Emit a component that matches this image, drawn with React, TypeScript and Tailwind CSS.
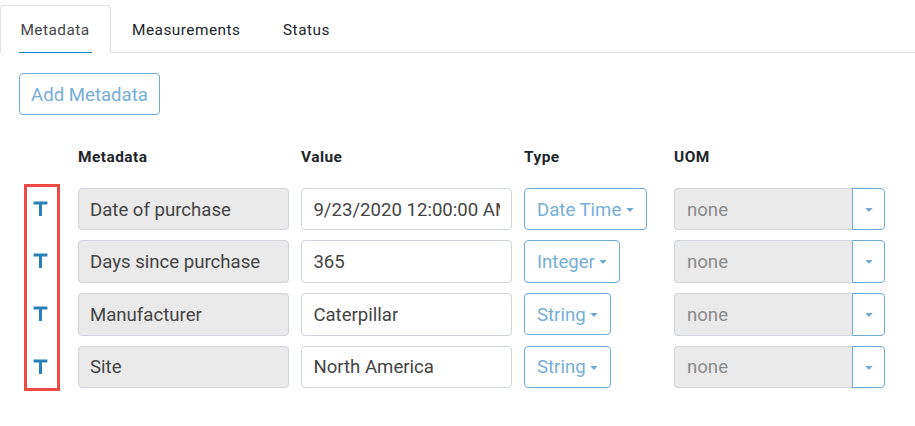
import React from 'react';

type Row = {
  name: string;
  value: string;
  type: string;
  height: string;
  typeSize: string;
  textPad: string;
  caretPad: string;
};

const rows: Row[] = [
  { name: 'Date of purchase', value: '9/23/2020 12:00:00 AM', type: 'Date Time', height: 'h-[42px] mb-[10px]', typeSize: 'w-[123px] h-[42px]', textPad: 'pt-px', caretPad: 'pt-px' },
  { name: 'Days since purchase', value: '365', type: 'Integer', height: 'h-[43px] mb-[10px]', typeSize: 'w-[96px] h-[43px]', textPad: 'pt-px', caretPad: 'pt-px' },
  { name: 'Manufacturer', value: 'Caterpillar', type: 'String', height: 'h-[43px] mb-[10px]', typeSize: 'w-[87px] h-[42px]', textPad: 'pt-px', caretPad: 'pt-0' },
  { name: 'Site', value: 'North America', type: 'String', height: 'h-[42px]', typeSize: 'w-[87px] h-[42px]', textPad: 'pb-px', caretPad: 'pt-[2px]' },
];

function Caret() {
  return (
    <svg className="block h-1 w-2 shrink-0" viewBox="0 0 8 4" fill="#6faad3">
      <path d="M.3 0h7.4L4 4z" />
    </svg>
  );
}

function TextIcon() {
  return (
    <svg className="block h-4 w-[15px]" viewBox="0 0 15 16" fill="#2a80b9">
      <path d="M.6 .6h13.8v2.9H9v11.4H6V3.5H.6z" />
    </svg>
  );
}

function MetadataRow({ row }: { row: Row }) {
  return (
    <div className={`flex ${row.height}`}>
      <div className="w-[59px] pt-[13px] pl-[14px]">
        <TextIcon />
      </div>
      <div className={`mr-3 flex h-full w-[211px] items-center rounded-[4px] border border-[#ced4da] bg-[#eaeaea] px-[11px] text-[#444] ${row.textPad}`}>
        {row.name}
      </div>
      <div className={`mr-3 flex h-full w-[211px] items-center rounded-[4px] border border-[#ced4da] bg-white px-[11.4px] text-[#444] ${row.textPad}`}>
        <span className="block overflow-hidden whitespace-nowrap">{row.value}</span>
      </div>
      <div className="w-[150px]">
        <button className={`flex items-center justify-between rounded-[4px] border border-[#6faad3] pr-[12px] pl-[12px] text-[#76aed5] ${row.typeSize}`}>
          <span className={`whitespace-nowrap ${row.textPad}`}>{row.type}</span>
          <span className="pt-px">
            <Caret />
          </span>
        </button>
      </div>
      <div className="flex h-full w-[211px]">
        <div className={`flex w-[178px] items-center rounded-l-[4px] border border-r-0 border-[#ced4da] bg-[#eaeaea] pl-[12px] text-[#8a8a8a] ${row.textPad}`}>
          none
        </div>
        <button className={`flex w-[33px] items-center justify-center rounded-r-[4px] border border-[#6faad3] ${row.caretPad}`}>
          <Caret />
        </button>
      </div>
    </div>
  );
}

export default function App() {
  return (
    <div className="h-[426px] w-[915px] overflow-hidden bg-white font-[Roboto,sans-serif] text-[#212529]">
      <nav className="flex h-[53px] pt-[5px] text-[15.4px] leading-[20px] tracking-[0.48px]">
        <div className="w-[111px] rounded-t-[4px] border border-b-0 border-[#dee2e6] pt-[14px] pl-[18px] text-[#444]">
          <div className="h-[33px] w-[73px] border-b border-[#0a84d0] pl-[1.4px]">Metadata</div>
        </div>
        <div className="flex flex-1 border-b border-[#dee2e6] pt-[15px] pl-[21px]">
          <span className="w-[151px]">Measurements</span>
          <span>Status</span>
        </div>
      </nav>
      <main className="pt-5 pl-[19px] text-[18.6px] leading-[28px]">
        <button className="flex h-[42px] w-[141px] items-center justify-center rounded-[4px] border border-[#6faad3] pt-px text-[#76aed5]">
          Add Metadata
        </button>
        <div className="flex h-[73px] pt-[32px] pl-[59px] text-[15.45px] leading-[20px] font-bold tracking-[0.45px]">
          <span className="w-[223px]">Metadata</span>
          <span className="w-[223px]">Value</span>
          <span className="w-[150px]">Type</span>
          <span>UOM</span>
        </div>
        <div className="relative">
          {rows.map((row) => (
            <MetadataRow key={row.name} row={row} />
          ))}
          <div className="pointer-events-none absolute top-[-4px] left-[5px] h-[207px] w-[36px] border-[3px] border-[#eb4b44]" />
        </div>
      </main>
    </div>
  );
}
